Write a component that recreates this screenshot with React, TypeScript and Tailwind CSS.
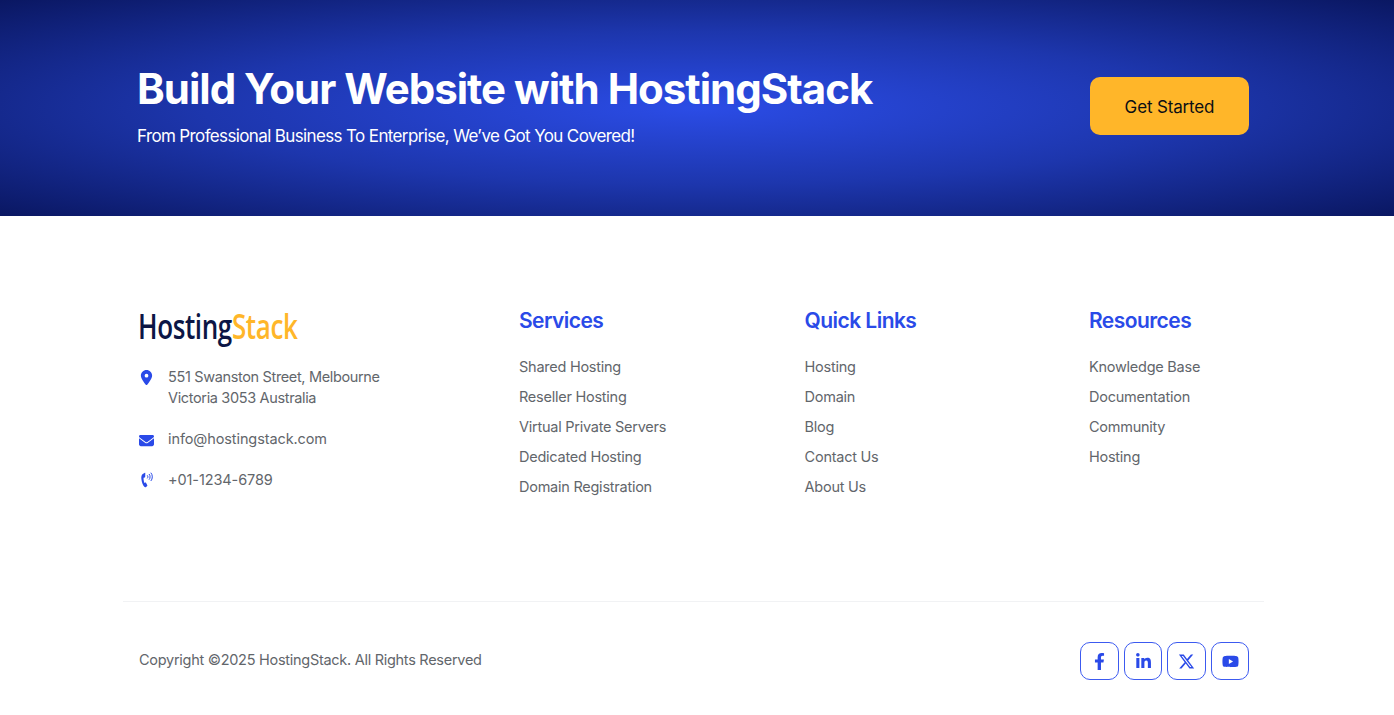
import React from "react";
import { FaFacebookF, FaLinkedinIn, FaYoutube } from "react-icons/fa";
import { FaXTwitter, FaEnvelope, FaLocationDot } from "react-icons/fa6";

const services = ["Shared Hosting", "Reseller Hosting", "Virtual Private Servers", "Dedicated Hosting", "Domain Registration"];
const quick = ["Hosting", "Domain", "Blog", "Contact Us", "About Us"];
const resources = ["Knowledge Base", "Documentation", "Community", "Hosting"];

function Column({ title, items, className }: { title: string; items: string[]; className: string }) {
  return (
    <div className={className}>
      <h3 className="mt-[1px] text-[21px] leading-[26px] font-semibold text-[#2a4ae8] tracking-[-0.55px]">{title}</h3>
      <ul className="mt-[18px] flex flex-col text-[14.5px] leading-[30px] text-[#62666b] tracking-[-0.25px]">
        {items.map((i) => (
          <li key={i + title}>{i}</li>
        ))}
      </ul>
    </div>
  );
}

function PhoneIcon() {
  return (
    <svg width="12" height="16" viewBox="0 0 12 16" fill="none">
      <path d="M3.9.8 1.800 1.900C.5 2.700.1 4.800.4 7.300c.4 2.900 1.400 5.700 2.700 7.300.6.700 1.300.8 2 .3l1-.8c.3-.2.3-.5.2-.8L5 10.800c-.2-.3-.5-.4-.8-.2l-.8.5C2.800 9.600 2.400 7.200 2.600 5.800l1.100-.4c.3-.1.5-.4.5-.7L4.300 1.200C4.300.9 4.100.7 3.900.8Z" fill="#2a4ae8" />
      <path d="M6.500 3.600c.6.600.6 1.900 0 2.500M8.300 2.300c1.100 1.200 1.100 4 0 5.100M10.100 1c1.700 1.900 1.700 5.800 0 7.700" stroke="#2a4ae8" strokeWidth="1" strokeLinecap="round" />
    </svg>
  );
}

function Social({ children, className = "" }: { children: React.ReactNode; className?: string }) {
  return (
    <div className={`flex h-[38px] items-center justify-center rounded-[10px] border border-[#3c5af0] text-[#2a4ae8] ${className}`}>
      {children}
    </div>
  );
}

export default function App() {
  return (
    <div className="min-h-[715px] bg-white font-['Inter','Noto_Sans',sans-serif]">
      <section className="flex h-[216px] items-center justify-between bg-[radial-gradient(ellipse_at_center,#2b4ce6_0%,#1d36ad_50%,#0a1762_100%)] pl-[137px] pr-[145px] pb-[4px]">
        <div>
          <h1 className="text-[42px] leading-[50px] font-bold tracking-[-1px] text-white">Build Your Website with HostingStack</h1>
          <p className="mt-[10px] text-[17px] leading-[24px] font-normal tracking-[-0.63px] text-white">From Professional Business To Enterprise, We’ve Got You Covered!</p>
        </div>
        <button className="h-[58px] w-[159px] rounded-[10px] bg-[#ffb629] pt-[3px] text-[17px] font-normal tracking-[-0.15px] text-[#0c0e14]">Get Started</button>
      </section>

      <section className="ml-[123px] flex h-[386px] w-[1141px] border-b border-[#f1f2f4] pt-[90px]">
        <div className="w-[396px] pl-[16px]">
          <div className="flex h-[40px] items-center">
            <span className="-ml-[1px] inline-block origin-left scale-x-[0.765] whitespace-nowrap font-['Open_Sans',sans-serif] text-[34px] leading-[40px] font-semibold tracking-[-0.5px] text-[#0c1645]">
              Hosting<span className="text-[#ffb629]">Stack</span>
            </span>
          </div>
          <div className="mt-[20px] flex items-start">
            <FaLocationDot className="mt-[4px] ml-[1px] h-[15px] w-[13px] text-[#2a4ae8]" />
            <p className="ml-[15px] text-[14.5px] leading-[21px] text-[#62666b] tracking-[-0.35px]">551 Swanston Street, Melbourne<br />Victoria 3053 Australia</p>
          </div>
          <div className="mt-[20px] flex items-start">
            <FaEnvelope className="mt-[5px] h-[15px] w-[15px] text-[#2a4ae8]" />
            <p className="ml-[14px] text-[14.5px] leading-[21px] text-[#62666b] tracking-[-0.1px]">info@hostingstack.com</p>
          </div>
          <div className="mt-[20px] flex items-start">
            <div className="mt-[3px] ml-[2px]"><PhoneIcon /></div>
            <p className="ml-[15px] text-[14.5px] leading-[21px] text-[#62666b] tracking-[-0.1px]">+01-1234-6789</p>
          </div>
        </div>
        <Column title="Services" items={services} className="mt-[1px] w-[285.6px]" />
        <Column title="Quick Links" items={quick} className="mt-[1px] w-[284.4px]" />
        <Column title="Resources" items={resources} className="mt-[1px] flex-1" />
      </section>

      <section className="flex items-center justify-between pl-[139px] pr-[145px] pt-[40px]">
        <p className="-mt-[2px] text-[14.5px] leading-[38px] text-[#62666b] tracking-[-0.28px]">Copyright ©2025 HostingStack. All Rights Reserved</p>
        <div className="flex gap-[5px]">
          <Social className="w-[39px]"><FaFacebookF className="h-[17px] w-[17px]" /></Social>
          <Social className="w-[38px]"><FaLinkedinIn className="h-[17px] w-[17px]" /></Social>
          <Social className="w-[39px]"><FaXTwitter className="h-[17px] w-[17px]" /></Social>
          <Social className="w-[38px]"><FaYoutube className="h-[17px] w-[17px]" /></Social>
        </div>
      </section>
    </div>
  );
}
